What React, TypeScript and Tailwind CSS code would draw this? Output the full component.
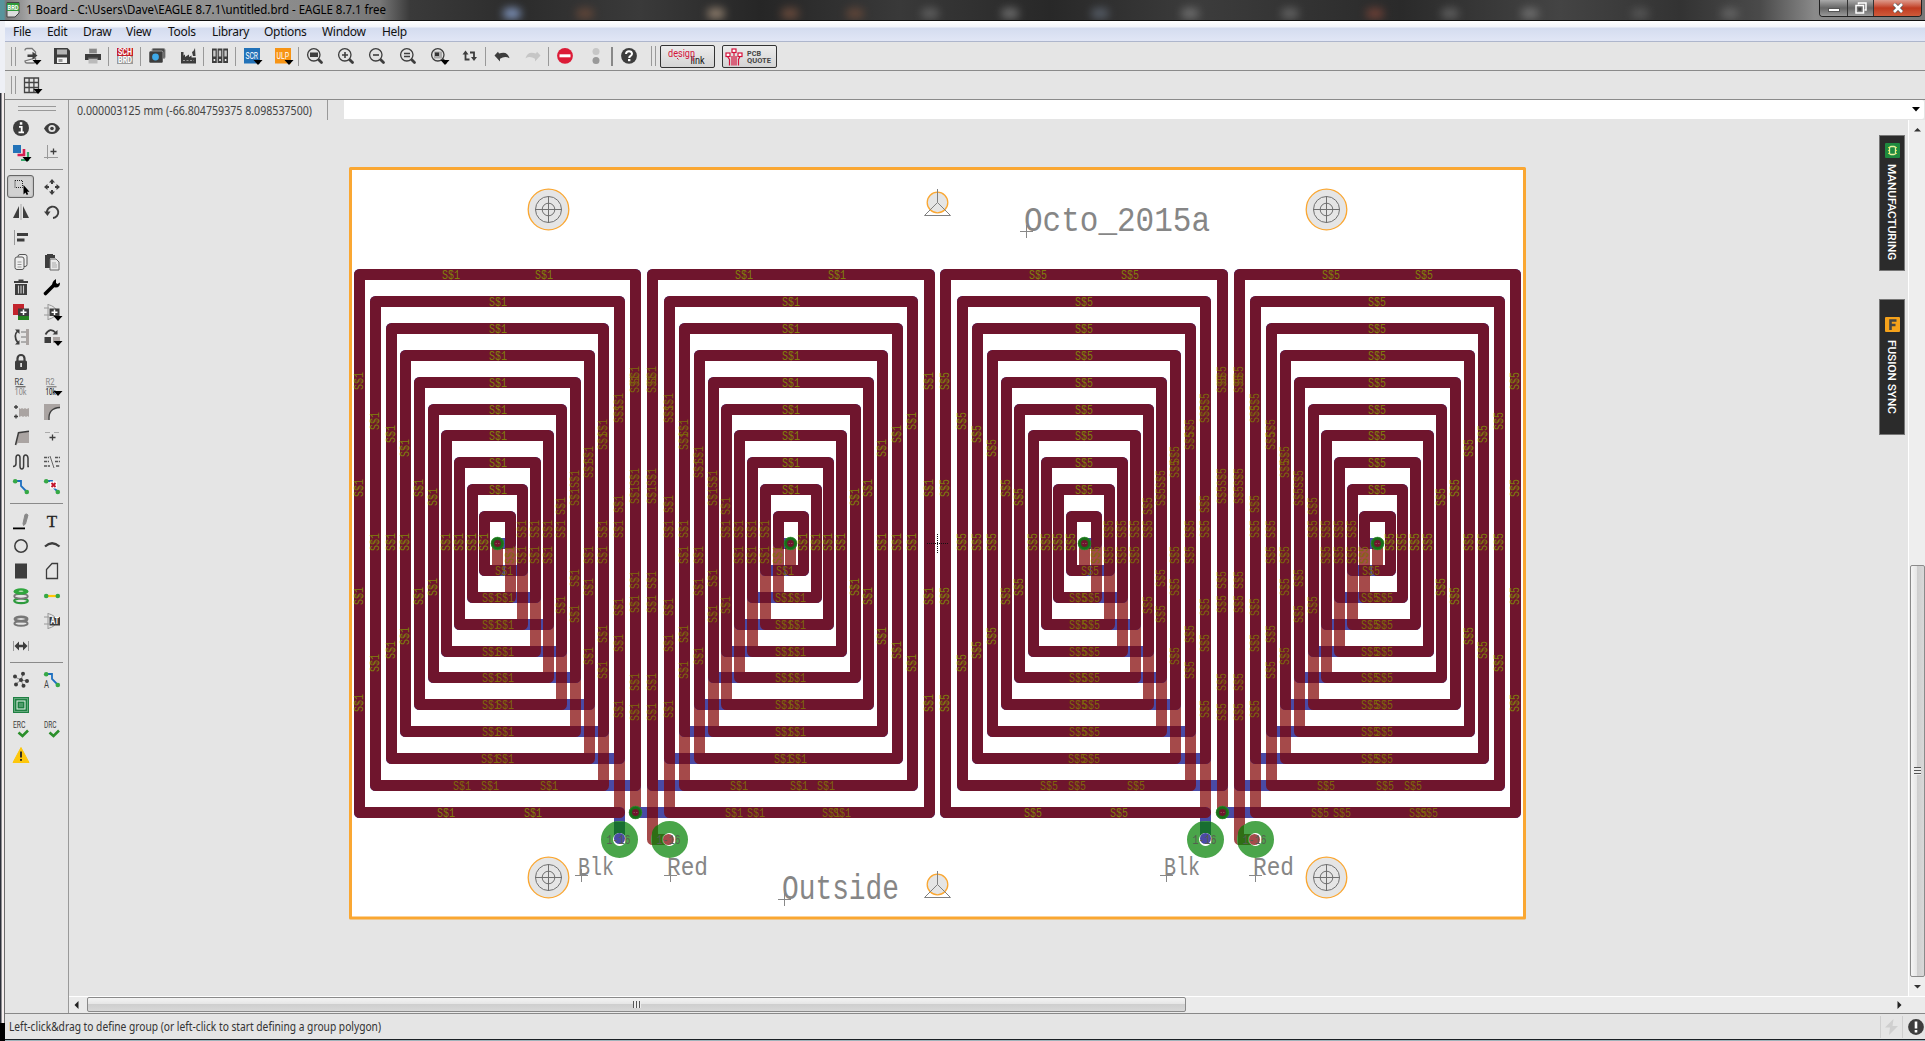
import React from "react";

type Kids = { children?: React.ReactNode };
const DK = "#3d3d3d";

/* ---------- icon helpers ---------- */
function Ico({ children, drop }: Kids & { drop?: boolean }) {
  return (
    <svg width="20" height="18" viewBox="-2 -1 20 18" fill="none" stroke="none" className="block shrink-0 overflow-visible">
      {children}
      {drop && <path d="M9.500 12h9l-4.500 5z" fill="#000" />}
    </svg>
  );
}
const Chip = ({ x, y, w, h, c }: { x: number; y: number; w: number; h: number; c: string }) => (
  <rect x={x} y={y} width={w} height={h} fill={c} />
);
const Lens = ({ children, drop }: Kids & { drop?: boolean }) => (
  <Ico drop={drop}>
    <path d="M11.500 11.500L14.500 14.500" stroke={DK} strokeWidth="2.800" strokeLinecap="round" />
    <circle cx="6.800" cy="6.800" r="6.200" stroke={DK} strokeWidth="1.300" fill="#e2e2e2" />
    {children}
  </Ico>
);

const T = ({ x, y, s, c, w, children, b }: Kids & { x: number; y: number; s: number; c: string; w: number; b?: boolean }) => (
  <text x={x} y={y} fontSize={s} fill={c} textLength={w} lengthAdjust="spacingAndGlyphs" fontFamily="Roboto, sans-serif" fontWeight={b ? 700 : 400}>
    {children}
  </text>
);

/* ---------- top toolbar icons ---------- */
const top: (React.ReactNode | "sep" | "sep2")[] = [
  <Ico drop>
    <path d="M2 2.500q0-2 2-2h5l3.500 3.500V6M12.500 10v3q0 2-2 2H4q-2 0-2-2z" stroke="#777" strokeWidth="1.300" fill="#eee" />
    <path d="M4.500 6.500h5V3.700L14.500 7.600 9.500 11.500V9h-5z" fill={DK} />
  </Ico>,
  <Ico>
    <path d="M0 0h13.500L16 2.500V16H0z" fill={DK} />
    <Chip x={3} y={1.500} w={10} h={5} c="#b5b5b5" />
    <Chip x={3} y={9.500} w={10} h={5.500} c="#f2f2f2" />
    <Chip x={4.500} y={11} w={4} h={3} c="#999" />
  </Ico>,
  <Ico>
    <Chip x={4} y={0.500} w={8} h={5} c="#aaa" />
    <path d="M4.500 2h7M4.500 4h7" stroke="#666" />
    <Chip x={0} y={6} w={16} h={6} c={DK} />
    <Chip x={3.500} y={9.500} w={9} h={6} c="#bbb" />
    <path d="M3.500 10h9" stroke="#222" />
  </Ico>,
  "sep",
  <Ico>
    <Chip x={0} y={0} w={16} h={8} c="#c5202c" />
    <Chip x={0} y={8} w={16} h={8} c="#9a9a9a" />
    <T x={1} y={7.200} s={8.500} c="#fff" w={14} b>SCH</T>
    <T x={1} y={15.200} s={8.500} c="#fff" w={14} b>BRD</T>
  </Ico>,
  "sep",
  <Ico>
    <rect x="3" y="0.500" width="13" height="10" rx="1.500" fill="#4a4a4a" stroke="#888" />
    <rect x="0" y="3" width="14" height="12" rx="1.500" fill={DK} stroke="#eee" strokeWidth="0.500" />
    <circle cx="6.500" cy="9" r="3.400" fill="#3fa9e8" />
  </Ico>,
  <Ico>
    <path d="M1 15.500V9l4-2.500v2.500l4-2.500v2.500l2.500-1.500V9.500H16v6z" fill={DK} />
    <path d="M1 4h2.500V12H1zM12 4q2-1 3-4l.5 8h-2.500z" fill={DK} />
    <path d="M3 12.500h11" stroke="#999" strokeDasharray="2 1.500" />
  </Ico>,
  "sep",
  <Ico>
    {[0, 5.600, 11.200].map((x) => (
      <g key={x}>
        <rect x={x} y="0.500" width="4.800" height="14.500" fill={DK} />
        <rect x={x + 1.200} y="2.500" width="2.400" height="6" fill="#c9c9c9" />
        <rect x={x + 1.600} y="11" width="1.600" height="2" fill="#eee" />
      </g>
    ))}
  </Ico>,
  "sep",
  <Ico drop>
    <Chip x={0} y={0} w={16} h={15.500} c="#2272b8" />
    <T x={1.500} y={11} s={9.500} c="#fff" w={12.500}>SCR</T>
  </Ico>,
  <Ico drop>
    <Chip x={0} y={0} w={16} h={15.500} c="#f79414" />
    <T x={1.500} y={11} s={9.500} c="#fff" w={12.500}>ULP</T>
  </Ico>,
  "sep",
  <Lens><Chip x={3} y={4.500} w={8} h={4.500} c={DK} /></Lens>,
  <Lens><path d="M4 7h6M7 4v6" stroke={DK} strokeWidth="1.600" /></Lens>,
  <Lens><path d="M4 7h6" stroke={DK} strokeWidth="1.600" /></Lens>,
  <Lens><path d="M4 5.500h6M4 8.500h6" stroke={DK} strokeWidth="1.300" /></Lens>,
  <Lens drop><rect x="3" y="3.500" width="8" height="7" fill="#aaa" /><Chip x={4} y={4.500} w={4} h={3.500} c="#333" /></Lens>,
  <Ico>
    <path d="M3.500 5V11.500H7.500M8 4.500H12V10" stroke={DK} strokeWidth="1.800" />
    <path d="M0.500 6.500L3.500 2.500l3 4zM9 9h6L12 13z" fill={DK} />
  </Ico>,
  "sep",
  <Ico><path d="M0.500 7.500L6 13.500V10.800q5-3.500 9.500-.5Q13.500 2.500 5 5.500L4 3.800z" fill={DK} /></Ico>,
  <Ico><path d="M15.500 7.500L10 13.500V10.800q-5-3.500-9.500-.5Q2.500 2.500 11 5.500L12 3.800z" fill="#c6c6c6" /></Ico>,
  "sep",
  <Ico><circle cx="8" cy="7.800" r="7.900" fill="#dc1b37" /><Chip x={2.500} y={6.300} w={11} h={3} c="#fff" /></Ico>,
  <Ico><circle cx="8" cy="3.500" r="3.500" fill="#c6c6c6" /><circle cx="8" cy="12.500" r="3.500" fill="#999" /></Ico>,
  "sep2",
  <Ico><circle cx="8" cy="7.800" r="7.900" fill={DK} /><path d="M5 6q.2-2.800 3-2.800T11 5.700q0 1.200-1.400 2.100T8.200 10" stroke="#fff" strokeWidth="2" /><Chip x={7} y={11} w={2.400} h={2.200} c="#fff" /></Ico>,
];

/* ---------- side palette icons ---------- */
const trace = (
  <>
    <path d="M2 2h6v5l6 6" stroke="#1d6fc0" strokeWidth="1.800" />
    <circle cx="2.200" cy="2.200" r="2.300" fill="#35a845" />
  </>
);
const gates = <path d="M0 4h5M0 11h5M4 0v16M4 .5q8 2 9 7.500-1 5.500-9 7.500" stroke="#999" />;
const side: (React.ReactNode | null)[][] = [
  [
    <Ico><circle cx="8" cy="8" r="8" fill={DK} /><path d="M6 6.800h2.700V12M5.500 12.300h5.500" stroke="#fff" strokeWidth="1.800" /><Chip x={6.800} y={2.200} w={2.500} h={2.500} c="#fff" /></Ico>,
    <Ico><path d="M0 8.500Q3 3 8 3t8 5.500Q13 14 8 14T0 8.500z" fill={DK} /><circle cx="8" cy="8.500" r="3.600" fill="#e5e5e5" /><circle cx="8" cy="8.500" r="1.800" fill={DK} /></Ico>,
    <Ico drop><Chip x={0} y={0} w={8} h={8} c="#2272b8" /><path d="M11 4v6H4.500" stroke="#d51f51" strokeWidth="2.600" /><path d="M15 7v8H8" stroke="#35a86a" strokeWidth="2.200" /></Ico>,
    <Ico><path d="M3.500 0v14M0 12.500h14" stroke="#999" /><path d="M6.500 6.500h6M9.500 3.500v6" stroke={DK} strokeWidth="1.300" /></Ico>,
  ],
  [
    <Ico><rect x="2" y="1.500" width="7.500" height="7" stroke="#222" strokeDasharray="1 1" /><path d="M10.500 6v9.500l2-2 1.200 2.500 1.500-.8L14 12.800h2.500z" fill="#000" /></Ico>,
    <Ico><path d="M8 0l3 3.500H9V5H7V3.500H5zM8 16l-3-3.500h2V11h2v1.500h2zM0 8l3.500-3v2H5v2H3.500v2zM16 8l-3.500 3V9H11V7h1.500V5z" fill={DK} /></Ico>,
    <Ico><path d="M0 14L6 2v12z" fill={DK} /><path d="M10 2l6 12h-6z" fill={DK} /><path d="M8 0v16" stroke="#aaa" /></Ico>,
    <Ico><path d="M3 9.500A5.700 5.700 0 1 1 9 14" stroke={DK} strokeWidth="1.900" /><path d="M0 7.500h6.500L3.500 12z" fill={DK} /></Ico>,
    <Ico><path d="M1.500 1v15" stroke="#999" /><Chip x={4} y={4} w={11} h={3} c={DK} /><Chip x={4} y={9.500} w={7.500} h={3} c={DK} /></Ico>,
    null,
    <Ico><rect x="5" y="0.500" width="9" height="12" rx="2" fill="#eee" stroke="#555" /><rect x="2" y="3" width="9" height="12.500" rx="2" fill="#eee" stroke="#555" /><path d="M4.500 8h4M4.500 10.500h4M4.500 13h4" stroke="#999" /></Ico>,
    <Ico><path d="M1 1h2V0h6v1h2v3H6v10H1z" fill={DK} /><path d="M6 5h6l3 3v8H6z" fill="#e9e9e9" stroke="#666" /><path d="M8 9h4M8 11h5M8 13h5" stroke="#aaa" /></Ico>,
    <Ico><Chip x={1} y={2} w={14} h={2} c={DK} /><Chip x={5.500} y={0.500} w={5} h={2} c={DK} /><path d="M2 5h12v11H2z" fill={DK} /><path d="M5.500 6.500v8M8 6.500v8M10.500 6.500v8" stroke="#ccc" strokeWidth="1.100" /></Ico>,
    <Ico><path d="M1.500 14.500L10 6" stroke="#000" strokeWidth="3.600" strokeLinecap="round" /><path d="M9 8Q6.500 3.500 12 0v4l1.500 1L16 3.500Q16 10 9 8z" fill="#000" /></Ico>,
    <Ico><Chip x={0} y={0} w={11} h={11} c="#c3242d" /><Chip x={5} y={11} w={11} h={5} c="#26821f" /><Chip x={5} y={4.500} w={11} h={7.500} c={DK} /><path d="M7.500 8.200h6M10.500 5.500V11" stroke="#fff" strokeWidth="1.500" /></Ico>,
    <Ico drop>{gates}<Chip x={5.500} y={4.500} w={10} h={7.500} c={DK} /><path d="M7.500 8.200h6M10.500 5.500V11" stroke="#fff" strokeWidth="1.500" /></Ico>,
    <Ico><path d="M5 1.500Q-.5 7 5 14" stroke={DK} strokeWidth="1.700" /><path d="M2 .5h4.500V5zM2 15.500h4.500V11z" fill={DK} /><path d="M8 3h5M8 8h5M8 13h5" stroke="#777" /><Chip x={13} y={0} w={3} h={16} c="#aaa4a2" /></Ico>,
    <Ico drop><path d="M1.500 5.500Q6-2.500 12 4" stroke={DK} strokeWidth="1.700" /><path d="M8.500 5.500h5V1z" fill={DK} /><Chip x={0.500} y={8} w={6.500} h={6} c={DK} /><Chip x={9} y={8} w={7} h={6} c="#aaa4a2" /></Ico>,
    <Ico><path d="M4.500 7V4.500a3.500 3.500 0 0 1 7 0V7" stroke={DK} strokeWidth="2.200" /><rect x="2" y="6.500" width="12" height="9.500" rx="1.500" fill={DK} /><Chip x={7.200} y={9} w={1.800} h={4} c="#ddd" /></Ico>,
    null,
    <Ico><T x={1.500} y={6} s={8.500} c={DK} w={9}>R2</T><Chip x={2.500} y={7.300} w={10} h={1} c={DK} /><T x={1.500} y={16} s={8.500} c="#888" w={12}>10k</T></Ico>,
    <Ico drop><T x={1.500} y={6} s={8.500} c="#888" w={9}>R2</T><Chip x={2.500} y={7.300} w={10} h={1} c="#666" /><T x={1.500} y={16} s={8.500} c="#000" w={10}>10k</T></Ico>,
    <Ico><path d="M1 3h4M3 1v4M1 12.500h4M3 10.500v4" stroke={DK} strokeWidth="1.300" /><path d="M6 4l1.500 1L9 4l1.500 1L12 4l1.500 1L16 4v9l-1.500-1-1.500 1-1.500-1-1.500 1-1.500-1L6 13z" fill="#aaa4a2" /></Ico>,
    <Ico><path d="M0 0h16v3Q4 4 4.500 16H0z" fill="#aaa4a2" /><path d="M5 16Q4 4 16 3.500" stroke={DK} strokeWidth="1.400" /></Ico>,
    <Ico><path d="M3 16L5.500 4 16 2.500V14H5z" fill="#aaa4a2" /><path d="M2.500 16L5.500 3.700 16 2.300" stroke={DK} strokeWidth="1.500" /></Ico>,
    <Ico><path d="M1 3.500h5M10 3.500h5" stroke="#aaa" /><path d="M5.500 8.500h6M8.500 5.500v6" stroke={DK} strokeWidth="1.300" /></Ico>,
    <Ico><path d="M0 12.500q3 0 3-3V4q0-3 2-3t2 3v8q0 3 1.800 3t1.800-3V4q0-3 2-3T15 4v8.500h1" stroke={DK} strokeWidth="1.500" /></Ico>,
    <Ico><path d="M0 3.500h5M0 7.500h5M0 12h6M11 3.500h5M11 7.500h5M12 12h4" stroke="#555" strokeWidth="1.400" strokeDasharray="3 .8" /><path d="M6 2l4 12" stroke="#666" /></Ico>,
    <Ico>{trace}<circle cx="13.800" cy="13" r="2.300" fill="#35a845" /></Ico>,
    <Ico>{trace}<circle cx="13.800" cy="13" r="2.300" fill="#35a845" /><Chip x={6} y={2.500} w={7} h={7} c="#fff" /><path d="M7.500 4l4 4M11.500 4l-4 4" stroke="#c3142d" strokeWidth="1.900" /></Ico>,
  ],
  [
    <Ico><path d="M12 1.500L13.500 1l1.500 1-2.500 9-2 1.500-.5-2z" fill="#888" stroke="#888" /><Chip x={0} y={14.500} w={12} h={1.800} c="#000" /></Ico>,
    <Ico><text x="8" y="14" fontSize="17" textAnchor="middle" fill="#222" stroke="#222" strokeWidth="0.300" fontFamily="Liberation Serif, serif">T</text></Ico>,
    <Ico><circle cx="8" cy="8" r="6.200" stroke={DK} strokeWidth="1.500" /></Ico>,
    <Ico><path d="M1 8.500Q8 2 15.500 8.500" stroke={DK} strokeWidth="2.200" /></Ico>,
    <Ico><Chip x={2} y={0.500} w={12} h={15} c={DK} /></Ico>,
    <Ico><path d="M2.500 15.500v-9l5.500-6h5.500v15z" stroke={DK} strokeWidth="1.300" /></Ico>,
    <Ico>
      <ellipse cx="8" cy="12.800" rx="6.800" ry="2.300" stroke="#2c9a3c" strokeWidth="2.200" />
      <ellipse cx="8" cy="8.200" rx="6.800" ry="2.400" stroke="#777" strokeWidth="1.800" fill="#e5e5e5" />
      <ellipse cx="8" cy="3.500" rx="7.500" ry="3.300" fill="#2fa63d" />
      <ellipse cx="8" cy="3.200" rx="2.500" ry="0.700" fill="#bbdcb8" />
    </Ico>,
    <Ico><path d="M2 8h12" stroke="#ffc708" strokeWidth="2.200" /><circle cx="2.200" cy="8" r="2.300" fill="#35a845" /><circle cx="13.800" cy="8" r="2.300" fill="#35a845" /></Ico>,
    <Ico><ellipse cx="8" cy="10.500" rx="6.600" ry="2.200" stroke="#777" strokeWidth="1.900" /><ellipse cx="8" cy="6" rx="6.200" ry="2.200" stroke="#777" strokeWidth="2.600" fill="#ddd" /></Ico>,
    <Ico>{gates}<Chip x={5.500} y={4} w={10.500} h={8.500} c={DK} /><T x={6.500} y={11} s={8.500} c="#fff" w={8.500} b>AT</T></Ico>,
    <Ico><path d="M.5 3v10M15.500 3v10" stroke="#999" /><path d="M1.500 8L6 3.500v3.300h4V3.500L14.500 8 10 12.500V9.200H6v3.300z" fill={DK} /></Ico>,
    null,
  ],
  [
    <Ico>
      <path d="M8 8L2 5M8 8l2-6M8 8l6 1M8 8l2 5M8 8l-5 4" stroke="#888" />
      {[[8, 8], [2, 4.500], [10, 1.800], [14, 9], [10.500, 13.800], [3, 12.500]].map(([x, y]) => <circle key={x} cx={x} cy={y} r="2" fill={DK} />)}
    </Ico>,
    <Ico>{trace}<circle cx="13.800" cy="13" r="2.300" fill="#35a845" /><T x={0} y={16} s={10} c={DK} w={5}>A</T></Ico>,
    <Ico>
      <Chip x={0} y={0} w={16} h={16} c="#1f8043" />
      <rect x="1.500" y="1.500" width="13" height="13" stroke="#a9d0b5" strokeDasharray="1 1" />
      <rect x="4" y="4" width="8" height="8" stroke="#eaf4ec" />
      <path d="M6 7h4M6 9h4" stroke="#7fb592" />
    </Ico>,
    null,
    <Ico><T x={0} y={6.200} s={9} c={DK} w={12.500}>ERC</T><path d="M5.500 10.500l4 3.500L15 8.500" stroke="#2b8f2b" strokeWidth="2.600" /></Ico>,
    <Ico><T x={0} y={6.200} s={9} c={DK} w={12.500}>DRC</T><path d="M5.500 10.500l4 3.500L15 8.500" stroke="#2b8f2b" strokeWidth="2.600" /></Ico>,
    <Ico><path d="M8 .5L16 15.500H0z" fill="#fdc70c" stroke="#fdc70c" strokeLinejoin="round" /><path d="M8 4.500v6" stroke="#222" strokeWidth="1.800" /><Chip x={7.100} y={12} w={1.800} h={1.800} c="#222" /></Ico>,
    null,
  ],
];

/* ---------- board ---------- */
const tops = [269, 296, 323, 350, 377, 404, 430, 457, 484, 511];
const bots = [807, 780, 753, 726, 699, 672, 646, 619, 592, 565];

type Coil = {
  name: string;
  outer: number[];
  inner: number[];
  via: number;
  red: number[][];
  blue: number[][];
  topX: number[];
  mid: number;
  low: number[][];
};
const coils: Coil[] = [
  {
    name: "S$1",
    outer: [354, 370, 386, 400, 414, 428, 441, 454, 467, 479],
    inner: [630, 614, 598, 584, 570, 556, 543, 530, 517, 505],
    via: 497.5, red: [[635.5, 812.5]], blue: [[619.5, 839.5], [619.5, 812.5]],
    topX: [451, 544], mid: 498, low: [[446, 533], [462, 490, 549], [490, 505], [491, 505], [504]],
  },
  {
    name: "S$1",
    outer: [924, 907, 892, 877, 863, 850, 836, 823, 811, 798],
    inner: [647, 664, 679, 694, 708, 721, 734, 747, 760, 773],
    via: 790.5, red: [[669.5, 839.5], [652.5, 839.5]], blue: [[635.5, 812.5]],
    topX: [744, 837], mid: 791, low: [[734, 756, 831, 842], [739, 799, 826], [783, 798], [784, 797], [785]],
  },
  {
    name: "S$5",
    outer: [940, 957, 972, 987, 1001, 1014, 1028, 1041, 1053, 1066],
    inner: [1217, 1200, 1185, 1170, 1156, 1143, 1130, 1117, 1104, 1091],
    via: 1084.5, red: [[1222.5, 812.5]], blue: [[1205.5, 839.5], [1205.5, 812.5]],
    topX: [1038, 1130], mid: 1084, low: [[1033, 1119], [1049, 1077, 1136], [1077, 1091], [1078, 1091], [1090]],
  },
  {
    name: "S$5",
    outer: [1510, 1494, 1478, 1464, 1450, 1436, 1423, 1410, 1397, 1385],
    inner: [1234, 1250, 1266, 1280, 1294, 1308, 1321, 1334, 1347, 1359],
    via: 1377.5, red: [[1255.5, 839.5], [1239.5, 839.5]], blue: [[1222.5, 812.5]],
    topX: [1331, 1424], mid: 1377, low: [[1320, 1342, 1418, 1429], [1326, 1385, 1413], [1370, 1384], [1370, 1384], [1371]],
  },
];
const outerY = [
  [381, 488, 596, 703], [421, 542, 663], [434, 542, 650], [448, 542, 636], [488, 596],
  [497, 587], [542], [542], [542], [542],
];
const innerY = [
  [375, 384, 477, 495, 580, 604, 682, 712], [402, 414, 504, 529, 607, 643, 709], [428, 441, 529, 555, 634, 670],
  [455, 469, 555, 587, 656], [479, 497, 578, 614], [506, 529, 605], [529, 555], [529, 555], [529, 555], [555],
];

const line = (pts: number[][]) => "M" + pts.map((p) => p.join(",")).join("L");
function redPath(c: Coil) {
  const pts = [...c.red];
  for (let k = 0; k < 10; k++) {
    const nx = k < 9 ? c.inner[k + 1] + 5.5 : c.via;
    const ix = c.inner[k] + 5.5, ox = c.outer[k] + 5.5, t = tops[k] + 5.5, b = bots[k] + 5.5;
    pts.push([ix, t], [ox, t], [ox, b], [nx, b]);
  }
  pts.push([c.via, 543.5]);
  return line(pts);
}
function bluePath(c: Coil) {
  const pts = [...c.blue];
  for (let k = 0; k < 10; k++) {
    const ix = c.inner[k] + 5.5, ox = c.outer[k] + 5.5, t = tops[k] + 5.5, b = bots[k] + 5.5;
    const down = k < 9 ? bots[k + 1] + 5.5 : 543.5;
    pts.push([ox, b], [ox, t], [ix, t], [ix, down]);
  }
  pts.push([c.via, 543.5]);
  return line(pts);
}

function Label({ x, y, t, v, dim }: { x: number; y: number; t: string; v?: boolean; dim?: boolean }) {
  return (
    <g transform={v ? `translate(${x} ${y}) rotate(-90)` : `translate(${x} ${y})`}>
      <text x={-9} y={4.300} fontSize={13} textLength={18} lengthAdjust="spacingAndGlyphs" fontFamily="Liberation Mono, monospace" fill={dim ? "#7e680a" : "#80800a"}>
        {t}
      </text>
    </g>
  );
}

function CoilView({ c, i }: { c: Coil; i: number }) {
  const r = redPath(c), b = bluePath(c);
  const s = { fill: "none", strokeWidth: 11, strokeLinejoin: "round" as const, strokeLinecap: "round" as const };
  return (
    <g>
      <mask id={`m${i}`} maskUnits="userSpaceOnUse" x="340" y="250" width="1200" height="620">
        <path d={r} {...s} stroke="#fff" />
      </mask>
      <path d={r} {...s} stroke="#a54a4a" />
      <path d={b} {...s} stroke="#4a4aa5" />
      <path d={b} {...s} stroke="#6f152d" mask={`url(#m${i})`} />
      {c.topX.map((x) => <Label key={x} x={x} y={274.500} t={c.name} />)}
      {tops.slice(1, 9).map((y) => <Label key={y} x={c.mid} y={y + 5.500} t={c.name} />)}
      {bots.map((y, k) =>
        (k === 9 ? c.low[4] : k > 2 ? c.low[3] : c.low[k]).map((x) => <Label key={`${k}-${x}`} x={x} y={y + 5.500} t={c.name} dim={k > 0 || i % 2 === 1} />),
      )}
      {c.outer.map((x, k) => outerY[k].map((y) => <Label key={`${x}-${y}`} x={x + 4.500} y={y} t={c.name} v />))}
      {c.inner.map((x, k) => innerY[k].map((y) => <Label key={`${x}-${y}`} x={x + 4.500} y={y} t={c.name} v dim />))}
      <Via x={c.via} y={543.500} />
    </g>
  );
}
const Via = ({ x, y }: { x: number; y: number }) => (
  <g>
    <circle cx={x} cy={y} r="5" fill="#6f152d" stroke="#186e18" strokeWidth="3.200" />
    <circle cx={x} cy={y} r="6.300" fill="none" stroke="#2f8f2f" strokeWidth="0.700" />
    <path d={`M${x - 2} ${y}h4`} stroke="#8a4a55" strokeWidth="1" strokeDasharray="1.500 1" />
  </g>
);
function Pad({ x, red }: { x: number; red?: boolean }) {
  return (
    <g transform={`translate(${x} 839.500)`}>
      <circle r="12.200" fill="none" stroke="#4aa54a" strokeWidth="12.600" />
      {red ? <path d="M-17.500 -7Q-16 -13 -11.500 -14.500V-5.500H-4A6 6 0 0 0 -4 5.500H-17.500z" fill="#2f6e15" /> : <path d="M-5.500 -17.700h11V-3A6 6 0 0 0 -5.500 -3z" fill="#186e30" />}
      <circle r="6.500" fill="#fff" />
      <circle r="5.500" fill={red ? "#a54a4a" : "#4a4aa5"} cx={red ? -1 : 0} cy={red ? 0 : -1} />
      <text x="-13" y="4" fontSize="12.500" textLength="24" lengthAdjust="spacingAndGlyphs" fill="#555f50" fontFamily="Liberation Mono, monospace">1-16</text>
    </g>
  );
}
const Hole = ({ x, y }: { x: number; y: number }) => (
  <g transform={`translate(${x} ${y})`} fill="none" stroke="#707070">
    <circle r="20.300" fill="#e5e5e5" stroke="#faa732" strokeWidth="1.300" />
    <circle r="13" /><circle r="6.300" />
    <path d="M-13.500 0h27M0 -13.500v27" />
  </g>
);
const Mark = ({ y }: { y: number }) => (
  <g transform={`translate(937.500 ${y})`} fill="none" stroke="#808080">
    <circle r="10.300" fill="#e5e5e5" stroke="#faa732" strokeWidth="1.300" />
    <path d="M0 -13.500V0L-13 13H13L0 0" />
  </g>
);
function Note({ x, y, s, w, children, cx }: Kids & { x: number; y: number; s: number; w: number; cx: number }) {
  return (
    <g>
      <path d={`M${cx - 6.5} ${y}h13M${cx} ${y - 6.5}v13`} stroke="#888" />
      <text x={x} y={y - 0.500} fontSize={s} textLength={w} lengthAdjust="spacingAndGlyphs" fill="#868686" fontFamily="Liberation Mono, monospace">{children}</text>
    </g>
  );
}

function Board() {
  return (
    <svg width="1839" height="876" viewBox="69 120 1839 876" className="block">
      <rect x="350.500" y="168.500" width="1174" height="749.500" fill="#fff" stroke="#faa732" strokeWidth="3" strokeLinejoin="round" />
      {coils.map((c, i) => <CoilView key={i} c={c} i={i} />)}
      <rect x="647" y="807" width="11" height="11" fill="#6f152d" />
      <rect x="1234" y="807" width="11" height="11" fill="#6f152d" />
      <Via x={635.500} y={812.500} /><Via x={1222.500} y={812.500} />
      <Pad x={619.500} /><Pad x={669.500} red /><Pad x={1205.500} /><Pad x={1255.500} red />
      <Hole x={548.500} y={209.500} /><Hole x={1326.500} y={209.500} /><Hole x={548.500} y={877.500} /><Hole x={1326.500} y={877.500} />
      <Mark y={202.500} /><Mark y={884.500} />
      <Note x={1024} y={231.500} s={35} w={186} cx={1026.500}>Octo_2015a</Note>
      <Note x={782} y={899.500} s={35} w={117} cx={784.500}>Outside</Note>
      <Note x={578} y={875.500} s={25} w={36} cx={581.500}>Blk</Note>
      <Note x={667} y={875.500} s={25} w={41} cx={670.500}>Red</Note>
      <Note x={1164} y={875.500} s={25} w={36} cx={1166.500}>Blk</Note>
      <Note x={1253} y={875.500} s={25} w={41} cx={1255.500}>Red</Note>
      <path d="M927 543.500h21M937.500 534v19" stroke="#111" strokeDasharray="1 1" />
    </svg>
  );
}

/* ---------- window ---------- */
const menus: [string, number][] = [["File", 34], ["Edit", 36], ["Draw", 43], ["View", 42], ["Tools", 44], ["Library", 52], ["Options", 58], ["Window", 60], ["Help", 40]];

const glow: [number, string][] = [[512, "#8fa8d8"], [585, "#6a4a3a"], [716, "#a08c78"], [790, "#74503f"], [855, "#6a4a3a"], [930, "#666"], [1010, "#777"], [1100, "#5c6470"], [1190, "#777"], [1290, "#6a6a6a"], [1375, "#7a4438"], [1450, "#666"], [1530, "#777"], [1640, "#5a5a5a"], [1730, "#6a6a6a"]];

function SideTab({ label, icon, cls }: { label: string; icon: React.ReactNode; cls: string }) {
  return (
    <div className={"flex h-[136px] w-[26px] flex-col items-center border border-[#777] bg-[#2b2b2b] " + cls}>
      {icon}
      <span className="font-['Roboto',sans-serif] text-[11.700px] leading-[24px] font-medium text-white [writing-mode:vertical-rl]">{label}</span>
    </div>
  );
}

export default function App() {
  return (
    <div className="flex h-[1041px] w-[1925px] flex-col overflow-hidden bg-[#e5e5e5] font-['Noto_Sans',sans-serif] text-[12px] text-[#111]">
      <header className="relative flex h-[21px] shrink-0 justify-between overflow-hidden border-b border-[#111] bg-[linear-gradient(90deg,#58949c_0px,#58949c_4px,#777_6px,#a8a8a8_30px,#979797_120px,#8a8a8a_300px,#777_380px,#3a3a3a_410px,#2c2c2c_520px,#3a3a3a_640px,#262626_760px,#393939_900px,#282828_1050px,#3c3c3c_1200px,#2a2a2a_1400px,#444_1560px,#333_1680px,#4a4a4a_1760px,#8a8a8a_1815px,#777_1925px)]">
        {glow.map(([x, c]) => (
          <div key={x} className="absolute top-[8px] h-[11px] w-[18px] rounded-full opacity-80 blur-[4px]" style={{ left: x - 9, background: c }} />
        ))}
        <div className="flex items-start pt-px pl-[6px]">
          <svg width="14" height="17" viewBox="0 0 14 17">
            <path d="M1 1.500h12V12l-4 4H1z" fill="#ddd" stroke="#444" />
            <rect x="1" y="2" width="12" height="8" fill="#2f9a3a" />
            <T x={1.500} y={8.500} s={7} c="#fff" w={11} b>BRD</T>
          </svg>
          <svg width="372" height="19" className="ml-[6px] block overflow-visible">
            <text x="0" y="13" fontSize="13" textLength="360" lengthAdjust="spacingAndGlyphs" fontFamily="Noto Sans, sans-serif">1 Board - C:\Users\Dave\EAGLE 8.7.1\untitled.brd - EAGLE 8.7.1 free</text>
          </svg>
        </div>
        <div className="mr-[3px] flex h-[17px] overflow-hidden rounded-b-[4px] border border-t-0 border-[#222]">
          <div className="flex w-[28px] items-center justify-center border-r border-[#333] bg-gradient-to-b from-[#aaa] via-[#666] to-[#999]"><div className="mt-1 h-[4px] w-[12px] border border-[#555] bg-white" /></div>
          <div className="flex w-[26px] items-center justify-center border-r border-[#333] bg-gradient-to-b from-[#aaa] via-[#666] to-[#999]">
            <svg width="12" height="12" viewBox="0 0 12 12" fill="none" stroke="#fff" strokeWidth="1.500"><path d="M3.500 2.500v-1.500h7.500v7h-1.500" /><rect x="1" y="3.500" width="7.500" height="7.500" /><rect x="4" y="6.500" width="1.500" height="1.500" stroke="#444" /></svg>
          </div>
          <div className="flex w-[47px] items-center justify-center bg-gradient-to-b from-[#dd9a8c] via-[#c03a20] to-[#cf5a3a]">
            <svg width="12" height="10" viewBox="0 0 12 10"><path d="M2 1l8 8M10 1L2 9" stroke="#555" strokeWidth="4" /><path d="M2 1l8 8M10 1L2 9" stroke="#fff" strokeWidth="2.600" /></svg>
          </div>
        </div>
      </header>

      <div className="flex min-h-0 flex-1">
        <div className="flex w-[5px] shrink-0 flex-col">
          <div className="h-[72px] bg-[#eef0f6]" />
          <div className="flex h-[930px]">
            <div className="w-px bg-[#2b2d38]" /><div className="w-px bg-[#8d8d90]" /><div className="w-[2px] bg-[#f6eeee]" /><div className="w-px bg-[#6c6c6c]" />
          </div>
          <div className="flex-1 bg-black" />
        </div>

        <div className="flex min-w-0 flex-1 flex-col">
          <nav className="flex h-[21px] shrink-0 items-center border-b border-[#aeb6cc] bg-[linear-gradient(#fff_0px,#f3f5fa_6px,#d4dcef_7px,#e1e6f6_20px)] pt-[2px] pl-[8px]">
            {menus.map(([m, w]) => <span key={m} className="shrink-0 whitespace-nowrap tracking-[-0.300px]" style={{ width: w }}>{m}</span>)}
          </nav>

          <div className="flex h-[29px] shrink-0 items-center border-b border-[#8a8a8a] pl-[6px]">
            <div className="-mr-px h-[19px] w-[5px] shrink-0 border-x border-[#999]" />
            {top.map((t, i) =>
              t === "sep" || t === "sep2" ? (
                <div key={i} className={t === "sep" ? "h-[19px] w-px shrink-0 bg-[#999]" : "h-[19px] w-[2px] shrink-0 bg-[#888]"} />
              ) : (
                <div key={i} className="flex w-[31px] shrink-0 items-center justify-center">{t}</div>
              ),
            )}
            <div className="ml-[7px] h-[20px] w-[5px] border-x border-[#999]" />
            <div className="ml-[4px] flex h-[23px] w-[55px] items-center justify-center rounded-[2px] border border-[#333] bg-gradient-to-b from-[#ececec] to-[#d4d4d4]">
              <svg width="50" height="20" viewBox="0 0 50 20">
                <text x="5" y="10.500" fontSize="11" fill="#d5113b" textLength="27" lengthAdjust="spacingAndGlyphs" fontFamily="Roboto, sans-serif">design</text>
                <text x="27.500" y="18" fontSize="10" fill="#111" textLength="14" lengthAdjust="spacingAndGlyphs" fontFamily="Roboto, sans-serif">link</text>
                <path d="M14 12l1.500 1.500M30 10v5" stroke="#d5113b" />
              </svg>
            </div>
            <div className="ml-[7px] flex h-[23px] w-[55px] items-center justify-center rounded-[2px] border border-[#333] bg-gradient-to-b from-[#ececec] to-[#d4d4d4]">
              <svg width="51" height="20" viewBox="0 0 51 20">
                <g fill="#fff" stroke="#d5113b" strokeWidth="1.200">
                  <path d="M5.500 19.500v-6l-2-3M8 19.500V10M10 19.500V7M12 19.500V10M14.500 19.500v-6l1.500-3" fill="none" />
                  <rect x="2" y="7" width="4" height="3.500" /><rect x="8" y="3" width="4" height="3.500" /><rect x="14" y="7" width="4" height="3.500" />
                </g>
                <T x={23} y={10} s={7.500} c="#444" w={14} b>PCB</T>
                <T x={23} y={17} s={7.500} c="#444" w={24} b>QUOTE</T>
              </svg>
            </div>
          </div>

          <div className="flex h-[29px] shrink-0 items-center border-b border-[#8a8a8a] pl-[6px]">
            <div className="mr-[6px] h-[18px] w-[5px] border-x border-[#999]" />
            <Ico drop><path d="M.5 1h14v14.500H.5zM.5 5.500h14M.5 10.500h14M5.100 1v14.500M9.900 1v14.500" stroke="#444" strokeWidth="1.300" /></Ico>
          </div>

          <div className="flex h-[913px] shrink-0">
            <aside className="flex w-[64px] shrink-0 flex-col border-r border-[#999]">
              <div className="mt-[6px] mb-[4px] ml-[13px] h-[5px] w-[38px] border-y border-[#999]" />
              {side.map((sec, i) => (
                <React.Fragment key={i}>
                  {i > 0 && <div className="mx-[5px] my-1 h-px shrink-0 bg-[#8a8a8a]" />}
                  <div className="grid grid-cols-[31px_31px]">
                    {sec.map((ic, j) => (
                      <div key={j} className="flex h-[25px] items-center justify-center">
                        {i === 1 && j === 0 ? <div className="flex h-[23px] w-[27px] shrink-0 items-center justify-center rounded-[3px] border border-[#666] bg-[#d2d2d2] shadow-[inset_0_0_2px_#999]">{ic}</div> : ic}
                      </div>
                    ))}
                  </div>
                </React.Fragment>
              ))}
            </aside>

            <main className="flex min-w-0 flex-1 flex-col">
              <div className="flex h-[20px] shrink-0 items-center">
                <div className="h-full w-[259px] border-r border-[#999] pt-[2px] pl-[8px]">
                  <svg width="245" height="18" className="block overflow-visible"><text x="0" y="13" fontSize="12" fill="#444" textLength="235" lengthAdjust="spacingAndGlyphs" fontFamily="Noto Sans, sans-serif">0.000003125 mm (-66.804759375 8.098537500)</text></svg>
                </div>
                <div className="ml-[16px] flex h-[19px] flex-1 items-center justify-end self-start rounded-r-[2px] bg-white pr-[4px]">
                  <svg width="8" height="5"><path d="M0 0h8L4 4.500z" fill="#000" /></svg>
                </div>
                <div className="w-px" />
              </div>
              <div className="flex h-[876px] shrink-0">
                <div className="relative w-[1839px] shrink-0">
                  <Board />
                  <div className="absolute top-[15px] right-[3px] flex flex-col gap-[28px]">
                    <SideTab label="MANUFACTURING" cls="gap-[6px] pt-[7px]" icon={
                      <svg width="15" height="15" viewBox="0 0 15 15"><rect width="15" height="15" rx="1" fill="#1f8a3f" /><path d="M3 4.500h9M3 7.500h9M3 10.500h9" stroke="#d8d82c" /><rect x="4.500" y="3.500" width="6" height="8" rx="1.500" fill="#1f8a3f" stroke="#e5f0a0" strokeWidth="1.300" /></svg>
                    } />
                    <SideTab label="FUSION SYNC" cls="gap-[8px] pt-[17px]" icon={
                      <svg width="15" height="15" viewBox="0 0 15 15"><rect width="15" height="15" rx="1" fill="#f5a21b" /><path d="M5.500 13V3.500H11.500M5.500 8H10.500" stroke="#444" strokeWidth="2.600" fill="none" /></svg>
                    } />
                  </div>
                </div>
                <div className="flex flex-1 flex-col items-center border-l border-white bg-[#eee]">
                  <svg width="8" height="5" className="mt-[7px] mb-[433px] shrink-0"><path d="M1 4.500h7L4.500 1z" fill="#333" /></svg>
                  <div className="flex h-[412px] w-[15px] shrink-0 items-center justify-center rounded-[2px] border border-[#8a8a8a] bg-[linear-gradient(90deg,#f5f5f5,#e6e6e6_45%,#cfcfcf_50%,#d8d8d8)]">
                    <div className="h-[8px] w-[7px] bg-[repeating-linear-gradient(#555_0px,#555_1.500px,#eee_1.500px,#eee_3px)]" />
                  </div>
                  <svg width="8" height="5" className="mt-[8px] shrink-0"><path d="M1 0h7L4.500 3.500z" fill="#333" /></svg>
                </div>
              </div>
              <div className="flex h-[17px] shrink-0 items-center border-t border-white bg-[#ebebeb] pb-px">
                <svg width="5" height="8" className="mr-[8px] ml-[5px]"><path d="M4.500 0v8L.5 4z" fill="#222" /></svg>
                <div className="flex h-[15px] w-[1099px] items-center justify-center rounded-[2px] border border-[#8a8a8a] bg-[linear-gradient(#f4f4f4,#e6e6e6_45%,#cfcfcf_50%,#d8d8d8)]">
                  <div className="h-[7px] w-[8px] bg-[repeating-linear-gradient(90deg,#555_0px,#555_1.500px,#eee_1.500px,#eee_3px)]" />
                </div>
                <svg width="5" height="8" className="ml-auto mr-[23px]"><path d="M.5 0v8l4-4z" fill="#222" /></svg>
              </div>
            </main>
          </div>

          <footer className="flex h-[26px] shrink-0 items-center border-t border-[#888] pl-[4px]">
            <svg width="385" height="20" className="overflow-visible"><text x="0" y="14" fontSize="12" fill="#333" textLength="372" lengthAdjust="spacingAndGlyphs" fontFamily="Noto Sans, sans-serif">Left-click&amp;drag to define group (or left-click to start defining a group polygon)</text></svg>
            <div className="ml-auto flex h-[22px] w-[23px] items-center justify-center border-x border-[#cfcfcf]">
              <svg width="13" height="16" viewBox="0 0 13 16"><path d="M8.500 0L0 8.500h5L4 16l9-9H7.500z" fill="#cfcfcf" /></svg>
            </div>
            <svg width="16" height="16" viewBox="0 0 16 16" className="mr-px ml-[5px]"><circle cx="8" cy="8" r="7.900" fill="#3d3d3d" /><path d="M8 2.500v7M8 11v2.500" stroke="#fff" strokeWidth="2.600" /></svg>
          </footer>
          <div className="h-[2px] shrink-0 border-t border-[#1b2025] bg-[#9fb3ba]" />
        </div>
      </div>
    </div>
  );
}
